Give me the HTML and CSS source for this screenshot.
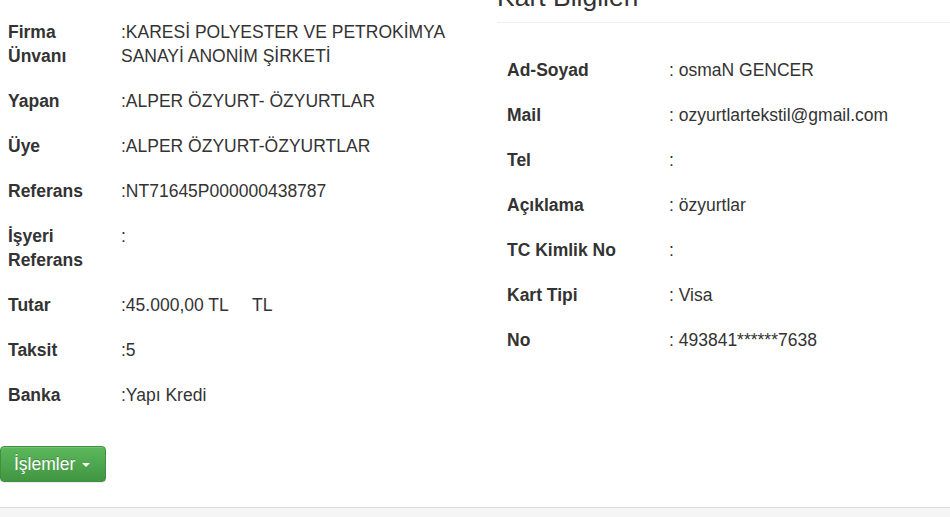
FILE: index.html
```html
<!DOCTYPE html>
<html lang="tr">
<head>
    <meta charset="UTF-8">
    <meta name="viewport" content="width=device-width, initial-scale=1.0">
    <title>Ödeme Detayı</title>
    <link rel="stylesheet" href="styles.css">
</head>
<body>

<div class="page">
    <div class="row">
        <!-- ===== ÖDEME BİLGİLERİ ===== -->
        <div class="col-left">
            <table class="info-table">
                <tr>
                    <th class="label">Firma Ünvanı</th>
                    <td>:KARESİ POLYESTER VE PETROKİMYA SANAYİ ANONİM ŞİRKETİ</td>
                </tr>
                <tr>
                    <th class="label">Yapan</th>
                    <td>:ALPER ÖZYURT- ÖZYURTLAR</td>
                </tr>
                <tr>
                    <th class="label">Üye</th>
                    <td>:ALPER ÖZYURT-ÖZYURTLAR</td>
                </tr>
                <tr>
                    <th class="label">Referans</th>
                    <td>:NT71645P000000438787</td>
                </tr>
                <tr>
                    <th class="label">İşyeri Referans</th>
                    <td>:</td>
                </tr>
                <tr>
                    <th class="label">Tutar</th>
                    <td>:45.000,00 TL &nbsp;&nbsp;&nbsp; TL</td>
                </tr>
                <tr>
                    <th class="label">Taksit</th>
                    <td>:5</td>
                </tr>
                <tr>
                    <th class="label">Banka</th>
                    <td>:Yapı Kredi</td>
                </tr>
            </table>

            <div class="btn-group">
                <button class="btn btn-success">İşlemler <span class="caret"></span></button>
            </div>
        </div>

        <!-- ===== KART BİLGİLERİ ===== -->
        <div class="col-right">
            <h3 class="section-title">Kart Bilgileri</h3>
            <table class="info-table card-table">
                <tr>
                    <th class="label">Ad-Soyad</th>
                    <td>: osmaN GENCER</td>
                </tr>
                <tr>
                    <th class="label">Mail</th>
                    <td>: ozyurtlartekstil@gmail.com</td>
                </tr>
                <tr>
                    <th class="label">Tel</th>
                    <td>:</td>
                </tr>
                <tr>
                    <th class="label">Açıklama</th>
                    <td>: özyurtlar</td>
                </tr>
                <tr>
                    <th class="label">TC Kimlik No</th>
                    <td>:</td>
                </tr>
                <tr>
                    <th class="label">Kart Tipi</th>
                    <td>: Visa</td>
                </tr>
                <tr>
                    <th class="label">No</th>
                    <td>: 493841******7638</td>
                </tr>
            </table>
        </div>
    </div>
</div>

<footer class="footer"></footer>

</body>
</html>
```

FILE: styles.css
```css
:root {
    --text: #333333;
    --border: #eeeeee;
    --footer-bg: #f5f5f5;
    --font-family: "Liberation Sans", Arial, Helvetica, sans-serif;
}
body {
    font-family: var(--font-family);
    color: var(--text);
    margin: 0;
    font-size: 17.5px;
    line-height: 24px;
    background: #fff;
    overflow: hidden;
}
.page {
    padding-top: 10px;
    padding-bottom: 25px;
}
.row {
    display: flex;
    gap: 15px;
}
.col-left {
    width: 482px;
    flex-shrink: 0;
}
.col-right {
    flex: 1;
}
.info-table {
    border-collapse: collapse;
}
.info-table th,
.info-table td {
    padding: 10px 8px 11px;
    vertical-align: top;
    text-align: left;
}
.info-table .label {
    font-weight: bold;
    width: 97px;
}
.info-table td {
    width: 345px;
}
.section-title {
    font-size: 26.5px;
    font-weight: normal;
    line-height: 1.1;
    margin: -27px 0 0;
    padding-bottom: 10px;
    border-bottom: 1px solid var(--border);
}
.card-table {
    margin-top: 25px;
}
.card-table th,
.card-table td {
    padding: 10px 10px 11px;
}
.card-table .label {
    width: 142px;
}
.card-table td {
    width: auto;
}
.btn-group {
    margin-top: 28px;
}
.btn {
    font-family: var(--font-family);
    font-size: 17.5px;
    line-height: 22px;
    padding: 6px 15px 6px 13px;
    border-radius: 4px;
    cursor: pointer;
}
.btn-success {
    color: #fff;
    background-image: linear-gradient(to bottom, #5cb85c 0%, #419641 100%);
    border: 1px solid #3e8f3e;
    box-shadow: inset 0 1px 0 rgba(255, 255, 255, .15), 0 1px 1px rgba(0, 0, 0, .075);
    text-shadow: 0 -1px 0 rgba(0, 0, 0, .2);
}
.caret {
    display: inline-block;
    width: 0;
    height: 0;
    margin-left: 2px;
    vertical-align: middle;
    border-top: 4px solid;
    border-right: 4px solid transparent;
    border-left: 4px solid transparent;
}
.footer {
    border-top: 1px solid #dddddd;
    background: var(--footer-bg);
    height: 9px;
}
```
